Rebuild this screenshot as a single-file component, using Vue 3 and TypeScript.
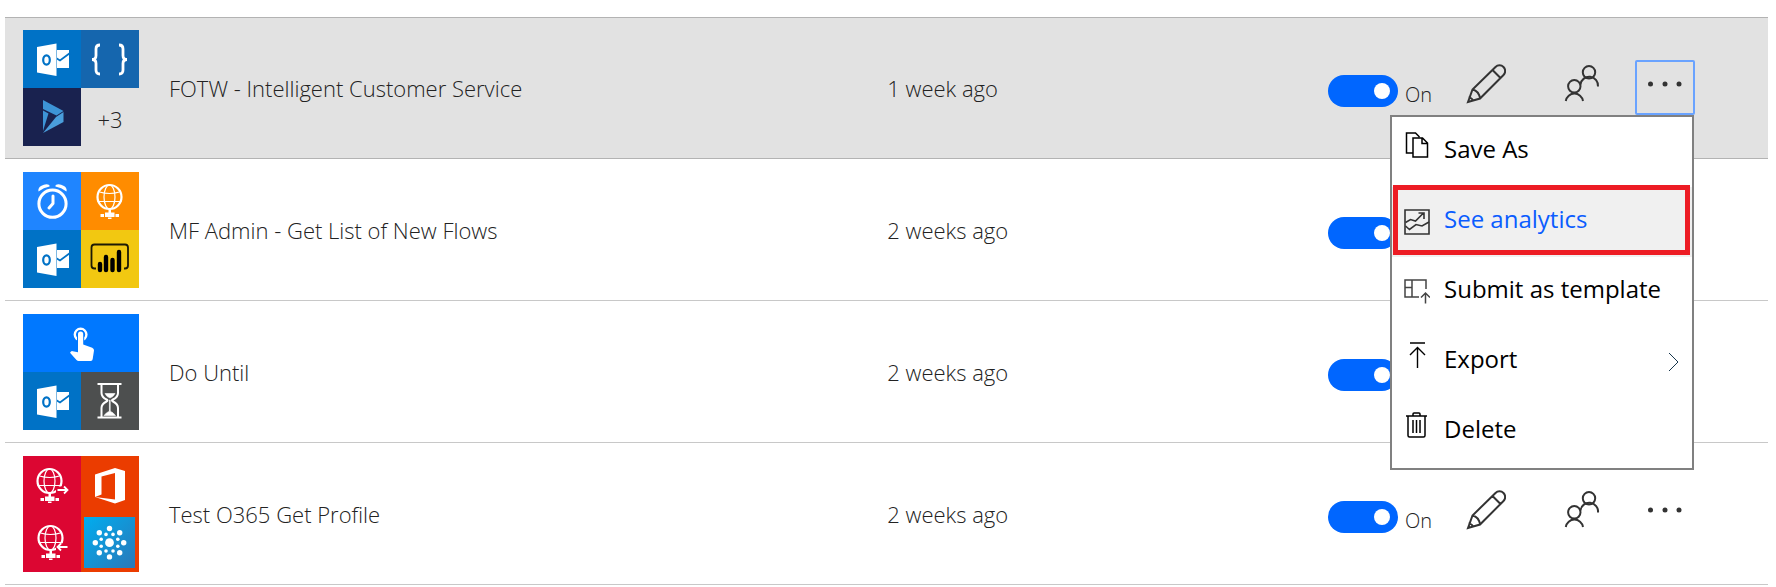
<script setup lang="ts">
import { ref } from 'vue'

interface Tile {
  icon?: string
  text?: string
  tone: string
  wide?: boolean
}

interface Flow {
  id: number
  name: string
  modified: string
  enabled: boolean
  tiles: Tile[]
}

interface MenuItem {
  label: string
  icon: string
  raised: boolean
  submenu?: boolean
}

const flows = ref<Flow[]>([
  {
    id: 1,
    name: 'FOTW - Intelligent Customer Service',
    modified: '1 week ago',
    enabled: true,
    tiles: [
      { icon: 'outlook', tone: 'sky' },
      { icon: 'braces', tone: 'steel' },
      { icon: 'dynamics', tone: 'navy' },
      { text: '+3', tone: 'plain' },
    ],
  },
  {
    id: 2,
    name: 'MF Admin - Get List of New Flows',
    modified: '2 weeks ago',
    enabled: true,
    tiles: [
      { icon: 'alarm', tone: 'azure' },
      { icon: 'globe', tone: 'orange' },
      { icon: 'outlook', tone: 'sky' },
      { icon: 'powerbi', tone: 'yellow' },
    ],
  },
  {
    id: 3,
    name: 'Do Until',
    modified: '2 weeks ago',
    enabled: true,
    tiles: [
      { icon: 'touch', tone: 'blue', wide: true },
      { icon: 'outlook', tone: 'sky' },
      { icon: 'hourglass', tone: 'gray' },
    ],
  },
  {
    id: 4,
    name: 'Test O365 Get Profile',
    modified: '2 weeks ago',
    enabled: true,
    tiles: [
      { icon: 'globe-out', tone: 'crimson' },
      { icon: 'office', tone: 'red' },
      { icon: 'globe-in', tone: 'crimson' },
      { icon: 'hub', tone: 'red' },
    ],
  },
])

const menuItems: MenuItem[] = [
  { label: 'Save As', icon: 'copy', raised: true },
  { label: 'See analytics', icon: 'chart', raised: false },
  { label: 'Submit as template', icon: 'template', raised: false },
  { label: 'Export', icon: 'export', raised: true, submenu: true },
  { label: 'Delete', icon: 'trash', raised: true },
]

const openMenu = ref<number | null>(1)
const activeItem = ref('See analytics')

function toggleMenu(id: number): void {
  openMenu.value = openMenu.value === id ? null : id
}
</script>

<template>
  <main class="page">
    <svg class="sprite" aria-hidden="true">
      <defs>
        <linearGradient id="hub-fill" x1="0" y1="0" x2="1" y2="1">
          <stop offset="0" stop-color="#00adef" />
          <stop offset="1" stop-color="#2a78b8" />
        </linearGradient>
        <symbol id="outlook" viewBox="0 0 58 58">
          <path d="M34 20h12v18H34z" fill="#fff" />
          <path d="M33 28l4 2.500 10-7.500" fill="none" stroke="#0072c6" stroke-width="1.800" />
          <path d="M14 17l19.500-3.500v32.500L14 42.500z" fill="#fff" />
          <ellipse cx="23.500" cy="30" rx="3.300" ry="4.600" fill="none" stroke="#0072c6" stroke-width="2.200" />
        </symbol>
        <symbol id="braces" viewBox="0 0 58 58">
          <g fill="none" stroke="#fff" stroke-width="2.800">
            <path d="M19 15q-4 0-4 4v6.500q0 4-4 4 4 0 4 4V40q0 4 4 4" />
            <path d="M38 15q4 0 4 4v6.500q0 4 4 4-4 0-4 4V40q0 4-4 4" />
          </g>
        </symbol>
        <symbol id="dynamics" viewBox="0 0 58 58">
          <path d="M20 12l20.500 11-7 4.500L20 21z" fill="#3d94d6" />
          <path d="M40.500 24v10L20 45l13-16z" fill="#4a9edc" />
          <path d="M20 22.500l5.500 3L20 43z" fill="#3d94d6" />
        </symbol>
        <symbol id="alarm" viewBox="0 0 58 58">
          <circle cx="29.500" cy="31.700" r="13.600" fill="none" stroke="#fff" stroke-width="3" />
          <path d="M30 24v7.500L26 36" fill="none" stroke="#fff" stroke-width="3" stroke-linecap="round" stroke-linejoin="round" />
          <path d="M15.500 19.500q-.8-3.500 2.500-5.500 5-3 8.300-1l.3 1.500q-6 1-11.100 5zM43.500 19.500q.8-3.500-2.500-5.500-5-3-8.300-1l-.3 1.500q6 1 11.100 5z" fill="#fff" />
        </symbol>
        <g id="globe-shape">
          <g fill="none" stroke="#fff">
            <circle cx="28.500" cy="25" r="12" stroke-width="2.200" />
            <ellipse cx="28.500" cy="25" rx="5.500" ry="12" stroke-width="1.200" />
            <path d="M18.500 20q10 3 20 0M16.500 29.500h24" stroke-width="1.200" />
          </g>
          <path d="M27.500 37h2.500v4h-2.500zM24 40.500h9.500v4.500H24zM19.500 42h3.500v3h-3.500zM34.500 42H38v3h-3.500zM27 45.500h3.500V47H27z" fill="#fff" />
        </g>
        <symbol id="globe" viewBox="0 0 58 58"><use href="#globe-shape" /></symbol>
        <symbol id="globe-out" viewBox="0 0 58 58">
          <use href="#globe-shape" x="-2" />
          <path d="M33 30.500h13v7H33z" fill="#dc0632" />
          <path d="M34.500 34h10M41 30.500l3.500 3.500-3.500 3.500" fill="none" stroke="#fff" stroke-width="1.800" />
        </symbol>
        <symbol id="globe-in" viewBox="0 0 58 58">
          <use href="#globe-shape" x="-1" y="-1" />
          <path d="M33 29.500h13v7H33z" fill="#dc0632" />
          <path d="M44.500 33h-10M38 29.500L34.500 33l3.500 3.500" fill="none" stroke="#fff" stroke-width="1.800" />
        </symbol>
        <symbol id="powerbi" viewBox="0 0 58 58">
          <path d="M15 38.500h-1.500q-3 0-3-3V17.500q0-3 3-3h30.500q3 0 3 3v18q0 3-3 3H43" fill="none" stroke="#1d1a05" stroke-width="1.800" />
          <path d="M19 34v6M25 27v13M31.500 30v10M38 22v18" fill="none" stroke="#000" stroke-width="4.400" stroke-linecap="round" />
        </symbol>
        <symbol id="touch" viewBox="0 0 116 58">
          <circle cx="57.600" cy="20.600" r="5.800" fill="none" stroke="#fff" stroke-width="2.400" />
          <path d="M54 19.500a3.600 3.600 0 0 1 7.200 0v16H54z" fill="#0078ff" />
          <path d="M55 20a2.600 2.600 0 0 1 5.200 0v10.500l9 3.200q2 .9 1.800 2.800L69.700 45q-.2 2-2 2H55.500q-1 0-2-1L47 38.800l1-1.300q.6-.6 1.700-.3l5.300 1z" fill="#fff" />
        </symbol>
        <symbol id="hourglass" viewBox="0 0 58 58">
          <path d="M16.500 12h24M16.500 45.500h24M20.500 12v9q0 4 5 6.500 2 1 0 2-5 2.500-5 6.500v9M37 12v9q0 4-5 6.500-2 1 0 2 5 2.500 5 6.500v9" fill="none" stroke="#fff" stroke-width="2" />
          <path d="M24 21.500h10q-1.500 3.500-5 4.500-3.500-1-5-4.500zM28.400 28v11h.8V28zM23 43.500q2-3 5.800-4.500 3.700 1.500 5.700 4.500z" fill="#fff" stroke="#fff" stroke-width=".6" />
        </symbol>
        <symbol id="office" viewBox="0 0 58 58">
          <path d="M14 18.500L34 12l10 3v29l-10 3.500L14 41l20 2.500V17l-13.500 3.500v18L14 41z" fill="#fff" />
        </symbol>
        <symbol id="hub" viewBox="0 0 58 58">
          <path d="M3 3h51v51H3z" fill="url(#hub-fill)" />
          <g fill="#fff">
            <circle cx="28.500" cy="28.700" r="4.400" />
            <circle cx="28.500" cy="14.500" r="2.700" /><circle cx="38.700" cy="18.700" r="2.700" />
            <circle cx="42.700" cy="28.700" r="2.700" /><circle cx="38.700" cy="38.700" r="2.700" />
            <circle cx="28.500" cy="42.900" r="2.700" /><circle cx="18.300" cy="38.700" r="2.700" />
            <circle cx="14.300" cy="28.700" r="2.700" /><circle cx="18.300" cy="18.700" r="2.700" />
            <circle cx="25" cy="20.400" r="1.800" /><circle cx="32" cy="20.400" r="1.800" />
            <circle cx="36.800" cy="25.200" r="1.800" /><circle cx="36.800" cy="32.200" r="1.800" />
            <circle cx="32" cy="37" r="1.800" /><circle cx="25" cy="37" r="1.800" />
            <circle cx="20.200" cy="32.200" r="1.800" /><circle cx="20.200" cy="25.200" r="1.800" />
          </g>
        </symbol>
        <symbol id="copy" viewBox="0 0 26 26">
          <path d="M9 21H2.500V1h9l4 4M9 6h9.500l5 5v14H9zM18 6v5.500h5.500" fill="none" stroke="#000" stroke-width="1.500" />
        </symbol>
        <symbol id="chart" viewBox="0 0 26 26">
          <path d="M1 1h24v24H1z" fill="none" stroke="#333" stroke-width="1.600" />
          <path d="M1.500 13.500l5-3 5 1.500 8-8M14.500 4H20v6M1.500 17l4 3.500 6.500-5 6 1.500 7-4" fill="none" stroke="#333" stroke-width="1.600" />
        </symbol>
        <symbol id="template" viewBox="0 0 26 26">
          <path d="M15 18H1V1h21v9M8 1v17M1 8.500h7" fill="none" stroke="#444" stroke-width="1.500" />
          <path d="M21.500 24.500V14M17 18.500l4.500-4.500 4.500 4.500" fill="none" stroke="#444" stroke-width="1.500" />
        </symbol>
        <symbol id="export" viewBox="0 0 26 26">
          <path d="M6 1h15M13.500 26V6M6 13l7.500-7.500L21 13" fill="none" stroke="#000" stroke-width="1.400" />
        </symbol>
        <symbol id="trash" viewBox="0 0 26 26">
          <path d="M2 4h21M9 4V2q0-1 1-1h5q1 0 1 1v2M4 4v19.500q0 1.500 1.500 1.500h14q1.500 0 1.500-1.500V4M9 8v13M12.500 8v13M16 8v13" fill="none" stroke="#000" stroke-width="1.500" />
        </symbol>
      </defs>
    </svg>

    <table class="flows" aria-label="Flows">
      <colgroup>
        <col class="col-tiles" />
        <col />
        <col class="col-modified" />
        <col class="col-actions" />
      </colgroup>
      <tbody>
        <tr v-for="flow in flows" :key="flow.id" :class="{ selected: openMenu === flow.id }">
          <td class="tiles-cell">
            <div class="tiles">
              <span
                v-for="(tile, index) in flow.tiles"
                :key="index"
                class="tile"
                :class="[tile.tone, { wide: tile.wide }]"
              >
                <svg v-if="tile.icon" class="tile-icon" aria-hidden="true"><use :href="`#${tile.icon}`" /></svg>
                <span v-else class="tile-text">{{ tile.text }}</span>
              </span>
            </div>
          </td>
          <td>{{ flow.name }}</td>
          <td>{{ flow.modified }}</td>
          <td class="actions-cell">
            <div class="actions">
              <div class="switch">
                <input :id="`switch-${flow.id}`" v-model="flow.enabled" type="checkbox" role="switch" />
                <label :for="`switch-${flow.id}`">{{ flow.enabled ? 'On' : 'Off' }}</label>
              </div>
              <button type="button" class="icon-button" :aria-label="`Edit ${flow.name}`">
                <svg viewBox="0 0 40 40" aria-hidden="true">
                  <path d="M2 38l4.500-12.500L29.500 3a5.600 5.600 0 0 1 8 8L14 34.500zM26.500 6l8 8M6.500 25.500q6.500 1.500 7.500 9M2.500 33.500q4 .5 4.500 3.500" />
                </svg>
              </button>
              <button type="button" class="icon-button" :aria-label="`Share ${flow.name}`">
                <svg viewBox="0 0 40 40" aria-hidden="true">
                  <circle cx="25" cy="8.300" r="6.200" />
                  <circle cx="10.300" cy="22.300" r="6.200" />
                  <path d="M1.800 37a8.700 8.700 0 0 1 17.200 0M16.500 20.500a8.800 8.800 0 0 1 17.500 2" />
                </svg>
              </button>
              <div class="more">
                <button
                  type="button"
                  class="more-button"
                  :class="{ open: openMenu === flow.id }"
                  :aria-label="`More commands for ${flow.name}`"
                  :aria-expanded="openMenu === flow.id"
                  @click="toggleMenu(flow.id)"
                >
                  <svg viewBox="0 0 56 51" aria-hidden="true">
                    <circle cx="13.500" cy="22" r="2.500" />
                    <circle cx="28" cy="22" r="2.500" />
                    <circle cx="42" cy="22" r="2.500" />
                  </svg>
                </button>
                <ul v-if="openMenu === flow.id" class="menu" role="menu">
                  <li v-for="item in menuItems" :key="item.label" role="none">
                    <button
                      type="button"
                      class="menu-item"
                      role="menuitem"
                      :class="{ active: activeItem === item.label }"
                      @mouseenter="activeItem = item.label"
                    >
                      <svg class="menu-icon" :class="{ raised: item.raised }" aria-hidden="true">
                        <use :href="`#${item.icon}`" />
                      </svg>
                      <span class="menu-label">{{ item.label }}</span>
                      <svg v-if="item.submenu" class="chevron" viewBox="0 0 12 20" aria-hidden="true">
                        <path d="M1 1l9 9-9 9" />
                      </svg>
                    </button>
                  </li>
                </ul>
              </div>
            </div>
          </td>
        </tr>
      </tbody>
    </table>
  </main>
</template>

<style>
body {
  margin: 0;
  background: #fff;
}
</style>

<style scoped>
.page {
  padding: 17px 8px 0 5px;
  font-family: "Open Sans", "Noto Sans", sans-serif;
  font-size: 22px;
  font-weight: 340;
  line-height: 28px;
  color: #222;
}

.sprite {
  position: absolute;
  width: 0;
  height: 0;
}

.flows {
  width: 100%;
  table-layout: fixed;
  border-collapse: separate;
  border-spacing: 0;
}

.col-tiles {
  width: 164px;
}

.col-modified {
  width: 25%;
}

.col-actions {
  width: 440px;
}

td {
  padding: 13px 0 12px;
  border-bottom: 1px solid #c8c8c8;
  vertical-align: middle;
}

tr:first-child td {
  padding-top: 12px;
  border-top: 1px solid #b3b3b3;
}

.selected td {
  background: #e2e2e2;
  border-bottom-color: #b3b3b3;
}

td.tiles-cell {
  padding-left: 18px;
}

.tiles {
  display: grid;
  grid-template-columns: 58px 58px;
  grid-auto-rows: 58px;
  width: 116px;
}

.tile {
  display: flex;
  align-items: center;
  justify-content: center;
}

.tile-icon {
  display: block;
  width: 100%;
  height: 58px;
}

.tile-text {
  padding-top: 4px;
}

.wide {
  grid-column: span 2;
}

.sky { background: #0072c6; }
.steel { background: #1566ae; }
.navy { background: #19224f; }
.azure { background: #1f85ff; }
.orange { background: #ff8c00; }
.yellow { background: #f2c811; }
.blue { background: #0078ff; }
.gray { background: #4d4f4f; }
.crimson { background: #dc0632; }
.red { background: #eb3c00; }

td.actions-cell {
  vertical-align: top;
}

.actions {
  display: grid;
  grid-template-columns: 138px 98px 71px 60px;
  align-items: start;
  padding-top: 30px;
}

.switch {
  display: flex;
  align-items: center;
  gap: 7px;
  padding-top: 15px;
}

.switch input {
  display: flex;
  align-items: center;
  justify-content: flex-start;
  box-sizing: border-box;
  width: 70px;
  height: 32px;
  margin: 0;
  padding: 0 8px;
  border-radius: 16px;
  background: #767676;
  appearance: none;
}

.switch input::before {
  width: 16px;
  height: 16px;
  border-radius: 50%;
  background: #fff;
  content: "";
}

.switch input:checked {
  justify-content: flex-end;
  background: #0066ff;
}

.switch label {
  padding-top: 8px;
  font-size: 20px;
  line-height: 24px;
}

button {
  margin: 0;
  border: 0;
  background: none;
  color: inherit;
  font: inherit;
}

.icon-button {
  width: 40px;
  padding: 4px 0 0;
}

.icon-button svg {
  display: block;
  width: 40px;
  height: 40px;
  fill: none;
  stroke: #333;
  stroke-width: 2;
}

.more {
  position: relative;
}

.more-button {
  display: block;
  box-sizing: border-box;
  width: 60px;
  height: 55px;
  padding: 0;
  border: 2px solid transparent;
  border-radius: 2px;
}

.more-button.open {
  border-color: #6aa3ff;
}

.more-button svg {
  display: block;
  width: 56px;
  height: 51px;
  fill: #333;
}

.menu {
  position: absolute;
  z-index: 1;
  top: 55px;
  right: 1px;
  box-sizing: border-box;
  width: 304px;
  margin: 0;
  padding: 0 0 1px;
  border: 2px solid #808080;
  background: #fff;
  list-style: none;
}

.menu-item {
  position: relative;
  display: flex;
  align-items: center;
  width: 100%;
  height: 70px;
  padding: 0 12px;
  color: #000;
  font-size: 24px;
  font-weight: 400;
  line-height: 32px;
  text-align: left;
}

.menu-item.active {
  background: #f0f0f0;
  color: #0a5cff;
}

.menu-item.active::after {
  position: absolute;
  inset: -2px 2px 2px 1px;
  border: 5px solid #ed1c24;
  content: "";
}

.menu-icon {
  flex: none;
  width: 26px;
  height: 26px;
  margin-right: 14px;
}

.menu-icon.raised {
  margin-bottom: 14px;
}

.menu-label {
  flex: 1;
  padding-bottom: 6px;
  white-space: nowrap;
}

.chevron {
  width: 12px;
  height: 20px;
  fill: none;
  stroke: #17364d;
  stroke-width: 1;
}
</style>
